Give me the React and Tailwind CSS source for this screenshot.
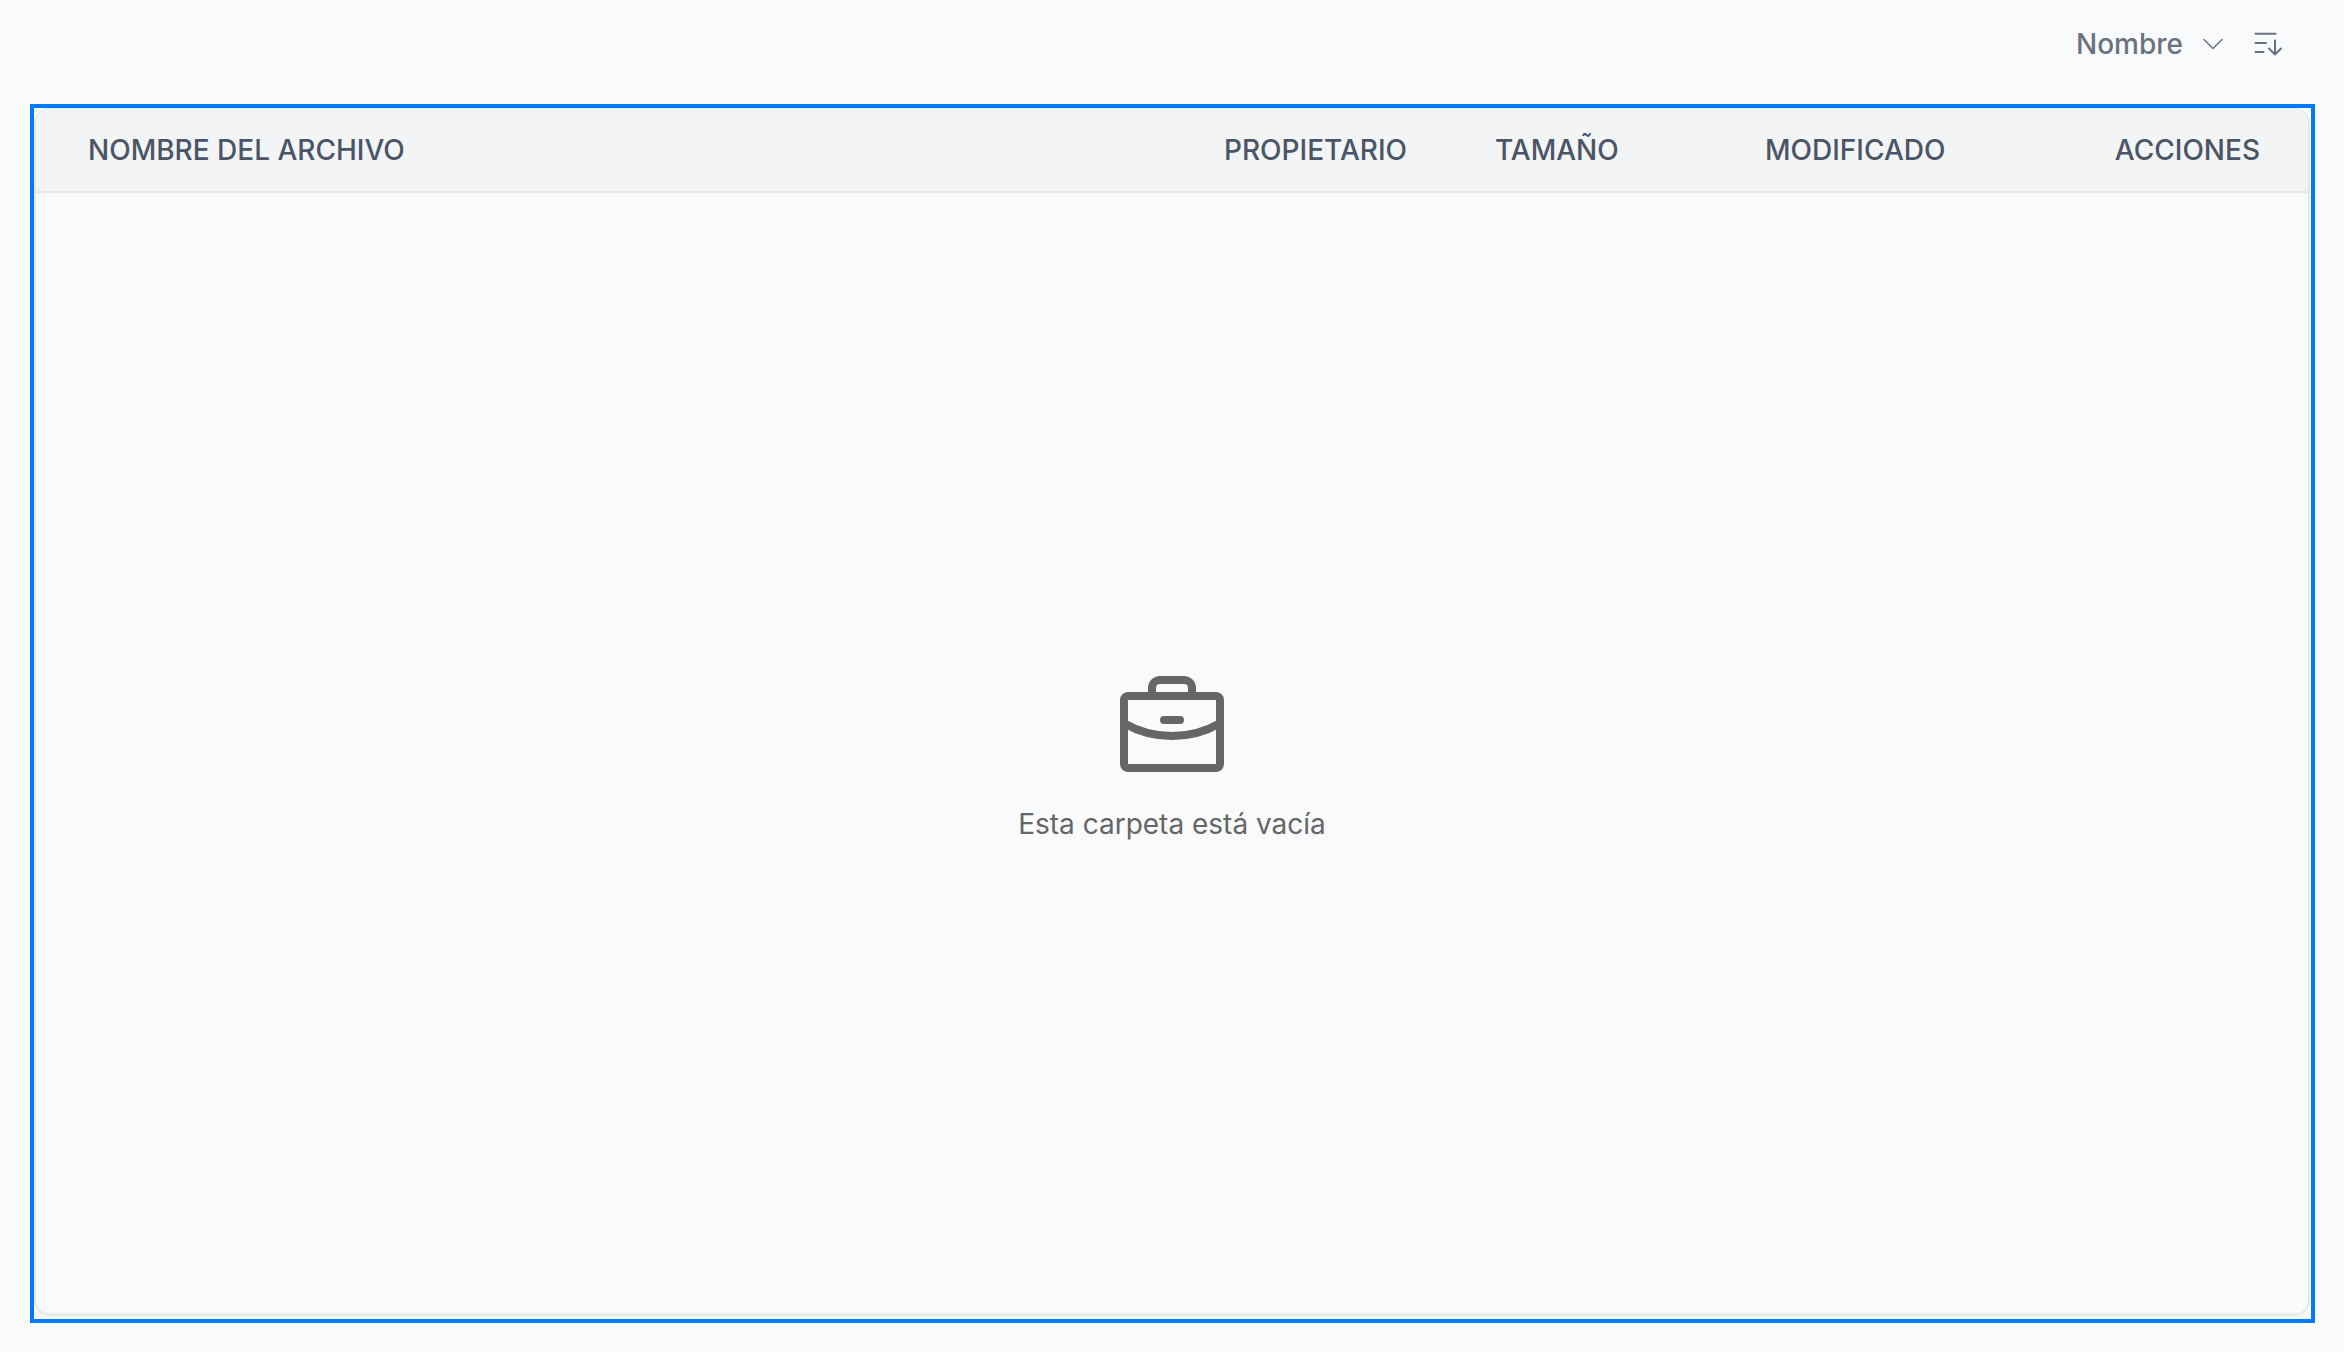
import React, { useState } from 'react';

const columns = [
    { key: 'name', label: 'Nombre del archivo', className: 'pl-[52px] text-left' },
    { key: 'owner', label: 'Propietario', className: 'w-[271px] text-left' },
    { key: 'size', label: 'Tamaño', className: 'w-[270px] text-left' },
    { key: 'modified', label: 'Modificado', className: 'w-[270px] text-left' },
    { key: 'actions', label: 'Acciones', className: 'w-[273px] pr-12 text-right' },
];

const ChevronIcon = () => (
    <svg className="w-6 h-6" fill="none" stroke="currentColor" viewBox="0 0 24 24" aria-hidden="true">
        <path strokeLinecap="round" strokeLinejoin="round" strokeWidth="1.5" d="M3 7.5l9 9 9-9" />
    </svg>
);

const SortIcon = () => (
    <svg className="w-8 h-8" fill="none" stroke="currentColor" viewBox="0 0 32 32" aria-hidden="true">
        <path strokeLinecap="round" strokeLinejoin="round" strokeWidth="2" d="M3.5 5.8h20M3.5 15h10.5M3.5 24h8M23 12.5v14M17 20.5l6 6 6-6" />
    </svg>
);

const BriefcaseIcon = () => (
    <svg className="w-32 h-32" fill="none" stroke="currentColor" strokeWidth="2" viewBox="0 0 32 32" aria-hidden="true">
        <rect x="4" y="8" width="24" height="18" rx="1" />
        <path d="M11 8V6a2 2 0 0 1 2-2h6a2 2 0 0 1 2 2v2" />
        <path d="M4 14.8A24 24 0 0 0 16 18a24 24 0 0 0 12-3.2" />
        <path strokeLinecap="round" d="M14 14h4" />
    </svg>
);

const SortControls = ({ sortBy, onSortChange, onToggleOrder }) => (
    <div className="flex items-center justify-end pr-[60px] pt-6 h-16 text-gray-500">
        <div className="relative flex items-center">
            <select
                className="appearance-none field-sizing-content bg-transparent pr-[42px] text-[28px] leading-10 font-medium cursor-pointer outline-none"
                aria-label="Ordenar por"
                value={sortBy}
                onChange={(e) => onSortChange(e.target.value)}
            >
                <option value="name">Nombre</option>
            </select>
            <span className="absolute right-0 pointer-events-none">
                <ChevronIcon />
            </span>
        </div>
        <button type="button" className="ml-[27px] cursor-pointer" aria-label="Cambiar orden" onClick={onToggleOrder}>
            <SortIcon />
        </button>
    </div>
);

const EmptyFolder = () => (
    <div className="flex flex-1 flex-col items-center justify-center gap-3 text-[#666666]">
        <BriefcaseIcon />
        <p className="text-[28px] leading-10">Esta carpeta está vacía</p>
    </div>
);

export default function App() {
    const [sortBy, setSortBy] = useState('name');
    const [ascending, setAscending] = useState(true);

    return (
        <div className="flex min-h-screen flex-col bg-[#f9fafc] font-['Inter',sans-serif]">
            <SortControls
                sortBy={sortBy}
                onSortChange={setSortBy}
                onToggleOrder={() => setAscending(!ascending)}
            />
            <main className="mr-[29px] ml-[30px] mt-10 mb-[29px] flex flex-1 flex-col border-4 border-[#007aff] pr-px pb-[3px]">
                <div className="flex flex-1 flex-col overflow-hidden rounded-2xl border-2 border-t border-gray-200">
                    <table className="w-full table-fixed border-collapse">
                        <thead className="border-b-2 border-gray-200 bg-gray-100 text-[28px] leading-10 text-gray-600 uppercase">
                            <tr>
                                {columns.map((column) => (
                                    <th key={column.key} scope="col" className={`py-[21px] font-medium ${column.className}`}>
                                        {column.label}
                                    </th>
                                ))}
                            </tr>
                        </thead>
                    </table>
                    <EmptyFolder />
                </div>
            </main>
        </div>
    );
}
